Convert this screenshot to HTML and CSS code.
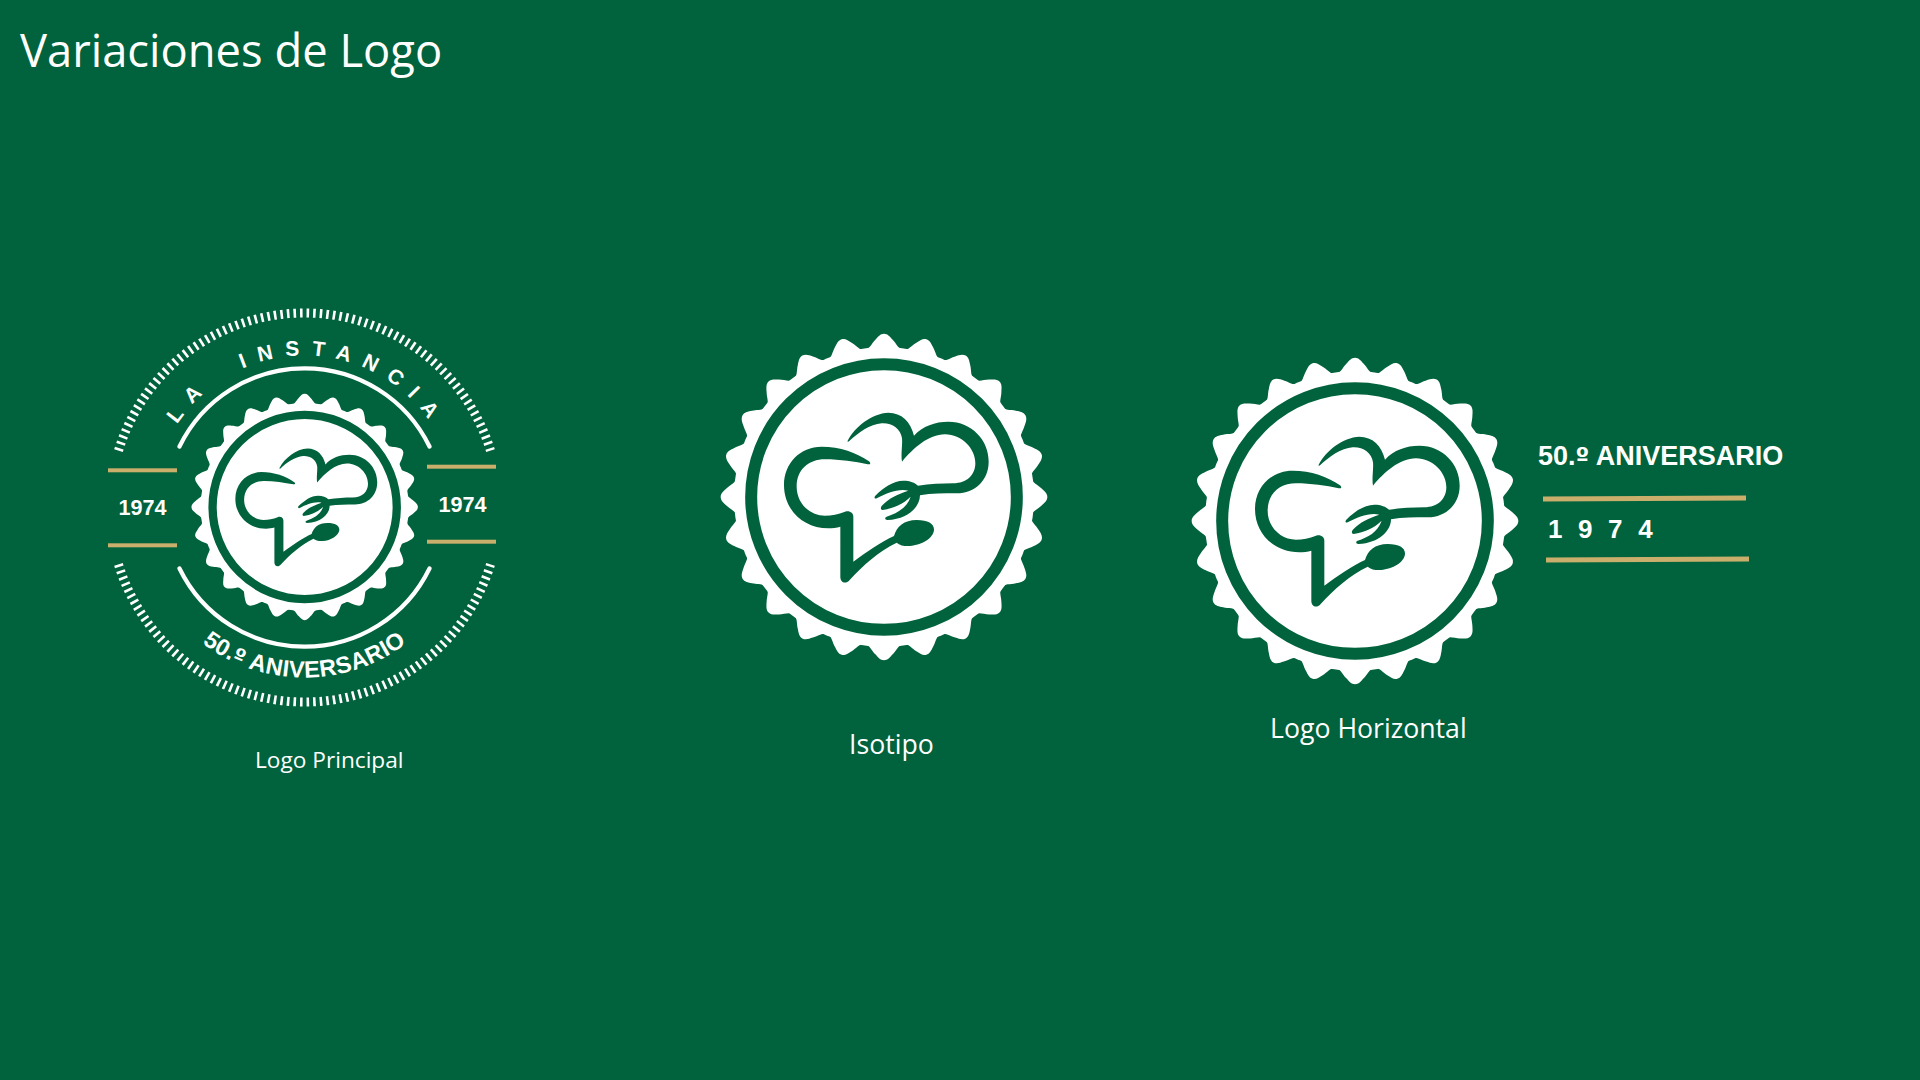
FILE: index.html
```html
<!DOCTYPE html>
<html lang="es">
<head>
<meta charset="utf-8">
<title>Variaciones de Logo</title>
<link rel="stylesheet" href="styles.css">
</head>
<body>
<svg class="defs" width="0" height="0" aria-hidden="true">
  <defs>
    <path id="tooth" d="M-58.3,-443.2 C-44,-441 -38,-460 -26,-472 C-18,-481 -11,-490 0,-490 C11,-490 18,-481 26,-472 C38,-460 44,-441 58.3,-443.2 L0,0 Z"/>
    <symbol id="seal" viewBox="0 0 1080 1080">
      <g transform="translate(552 531)" class="seal-white">
        <use href="#tooth"/><use href="#tooth" transform="rotate(15)"/><use href="#tooth" transform="rotate(30)"/><use href="#tooth" transform="rotate(45)"/>
        <use href="#tooth" transform="rotate(60)"/><use href="#tooth" transform="rotate(75)"/><use href="#tooth" transform="rotate(90)"/><use href="#tooth" transform="rotate(105)"/>
        <use href="#tooth" transform="rotate(120)"/><use href="#tooth" transform="rotate(135)"/><use href="#tooth" transform="rotate(150)"/><use href="#tooth" transform="rotate(165)"/>
        <use href="#tooth" transform="rotate(180)"/><use href="#tooth" transform="rotate(195)"/><use href="#tooth" transform="rotate(210)"/><use href="#tooth" transform="rotate(225)"/>
        <use href="#tooth" transform="rotate(240)"/><use href="#tooth" transform="rotate(255)"/><use href="#tooth" transform="rotate(270)"/><use href="#tooth" transform="rotate(285)"/>
        <use href="#tooth" transform="rotate(300)"/><use href="#tooth" transform="rotate(315)"/><use href="#tooth" transform="rotate(330)"/><use href="#tooth" transform="rotate(345)"/>
        <circle r="450"/>
      </g>
      <circle class="seal-ring" cx="552" cy="531" r="398.5"/>
      <path class="seal-green" d="M443,362 C465,320 515,280 565,278 C605,278 632,305 642,347 C668,318 705,305 745,305 C815,305 866,360 866,425 C866,480 825,520 770,520 C730,520 695,520 660,526 C660,560 625,598 562,600 C555,600 553,592 560,590 C590,580 620,565 632,530 C610,552 580,565 548,570 C541,570 541,562 547,556 C565,535 595,522 625,512 C595,505 560,520 530,535 C524,538 521,532 526,527 C550,503 580,482 610,482 C630,482 645,488 654,497 C690,492 725,490 760,490 C800,490 826,465 826,430 C826,385 785,343 735,343 C685,343 640,385 606,425 C602,405 608,375 606,355 C602,325 575,308 545,310 C510,313 475,338 447,364 C444,366 442,365 443,362 Z"/>
      <path class="seal-green" d="M507,424 C470,398 420,380 365,380 C300,380 252,430 252,495 C252,570 310,625 385,625 C397,625 410,623 421,620 L421,770 C421,788 437,794 449,780 C490,735 535,695 590,668 C600,677 615,679 630,678 C665,675 700,655 702,630 C703,612 685,600 650,600 C612,600 590,620 582,648 C545,665 500,695 460,725 L460,590 C460,578 448,570 435,575 C415,583 395,587 375,587 C330,587 290,550 290,500 C290,450 325,418 375,418 C420,418 465,425 503,433 C512,434 513,428 507,424 Z"/>
    </symbol>
  </defs>
</svg>

<main class="slide">
  <h1 class="title">Variaciones de Logo</h1>

  <figure class="logo logo-main">
    <svg class="main-art" viewBox="0 0 430 440" width="430" height="440">
      <path class="ticks" d="M28.5,160.6 A194.5,194.5 0 0 1 400.5,160.6"/>
      <path class="ticks" d="M28.5,274.4 A194.5,194.5 0 0 0 400.5,274.4"/>
      <path class="arc" d="M89.5,156.5 A139,139 0 0 1 339.5,156.5"/>
      <path class="arc" d="M89.5,278.5 A139,139 0 0 0 339.5,278.5"/>
      <path id="topcurve" class="guide" d="M62.5,217.5 A152,152 0 0 1 366.5,217.5"/>
      <path id="botcurve" class="guide" d="M44.5,217.5 A170,170 0 0 0 384.5,217.5"/>
      <text class="curve-top"><textPath href="#topcurve" startOffset="50.6%">LA INSTANCIA</textPath></text>
      <text class="curve-bottom"><textPath href="#botcurve" startOffset="50%">50.<tspan class="ord">º</tspan> ANIVERSARIO</textPath></text>
      <use href="#seal" x="87.1" y="94.3" width="249.6" height="249.6"/>
      <rect class="gold" x="18" y="178.3" width="69" height="4"/>
      <rect class="gold" x="18" y="253.3" width="69" height="4"/>
      <rect class="gold" x="337" y="174.7" width="69" height="4"/>
      <rect class="gold" x="337" y="249.7" width="69" height="4"/>
      <text class="year" x="28.5" y="225">1974</text>
      <text class="year" x="348.5" y="221.7">1974</text>
    </svg>
    <figcaption class="caption caption-main">Logo Principal</figcaption>
  </figure>

  <figure class="logo logo-iso">
    <svg class="seal-art" viewBox="0 0 360 360" width="360" height="360"><use href="#seal" width="360" height="360"/></svg>
    <figcaption class="caption caption-iso">Isotipo</figcaption>
  </figure>

  <figure class="logo logo-hor">
    <svg class="seal-art" viewBox="0 0 360 360" width="360" height="360"><use href="#seal" width="360" height="360"/></svg>
    <figcaption class="caption caption-hor">Logo Horizontal</figcaption>
  </figure>

  <div class="wordmark">
    <div class="wm-title">50.<span class="ord">º</span> ANIVERSARIO</div>
    <div class="wm-rule wm-rule-a"></div>
    <div class="wm-year">1974</div>
    <div class="wm-rule wm-rule-b"></div>
  </div>
</main>
</body>
</html>
```

FILE: styles.css
```css
* { box-sizing: border-box; }
html, body { margin: 0; padding: 0; }
body { background: #00633d; font-family: "Open Sans", sans-serif; color: #fff; }
.defs { position: absolute; }
.slide { position: relative; width: 1920px; height: 1080px; overflow: hidden; background: #00633d; padding: 18px 20px 0; }
.title { margin: 0; font-size: 45.33px; line-height: 64px; font-weight: 400; font-family: "Open Sans", sans-serif; }

.logo { position: absolute; margin: 0; }
.logo svg { display: block; }
.logo-main { left: 90px; top: 290px; width: 430px; height: 480px; }
.logo-iso { left: 700px; top: 320px; width: 360px; height: 460px; }
.logo-hor { left: 1171px; top: 344px; width: 360px; height: 420px; }

.caption { position: absolute; white-space: nowrap; font-family: "Open Sans", sans-serif; }
.caption-main { left: 165px; top: 454px; font-size: 22.67px; line-height: 32px; }
.caption-iso { left: 149px; top: 406px; font-size: 26.67px; line-height: 36px; }
.caption-hor { left: 99px; top: 366px; font-size: 26.67px; line-height: 36px; }

.seal-white { fill: #fff; }
.seal-ring { fill: none; stroke: #00633d; stroke-width: 36; }
.seal-green { fill: #00633d; }

.ticks { fill: none; stroke: #fff; stroke-width: 9; stroke-dasharray: 2.6 3.973; }
.arc { fill: none; stroke: #fff; stroke-width: 4.2; stroke-linecap: round; }
.guide { fill: none; stroke: none; }
.gold { fill: #c9ae6c; }

.year { font-family: "Liberation Sans", Arial, sans-serif; font-weight: 700; font-size: 21.6px; fill: #fff; }
.curve-top { font-family: "Liberation Sans", Arial, sans-serif; font-weight: 700; font-size: 21px; letter-spacing: 12px; word-spacing: 18px; fill: #fff; text-anchor: middle; }
.curve-bottom { font-family: "Liberation Sans", Arial, sans-serif; font-weight: 700; font-size: 23.5px; letter-spacing: 0.4px; fill: #fff; text-anchor: middle; }
.ord { font-family: "DejaVu Sans", sans-serif; font-size: 0.9em; }

.wordmark { position: absolute; left: 1538px; top: 437px; width: 260px; font-family: "Liberation Sans", Arial, sans-serif; font-weight: 700; }
.wm-title { font-size: 27px; line-height: 38px; white-space: nowrap; }
.wm-rule { width: 203px; height: 5px; background: #c9ae6c; transform: rotate(-0.3deg); }
.wm-rule-a { margin: 20px 0 0 5px; }
.wm-year { margin: 13px 0 0 10px; font-size: 26px; line-height: 30px; letter-spacing: 15.6px; }
.wm-rule-b { margin: 13px 0 0 8px; }
```
